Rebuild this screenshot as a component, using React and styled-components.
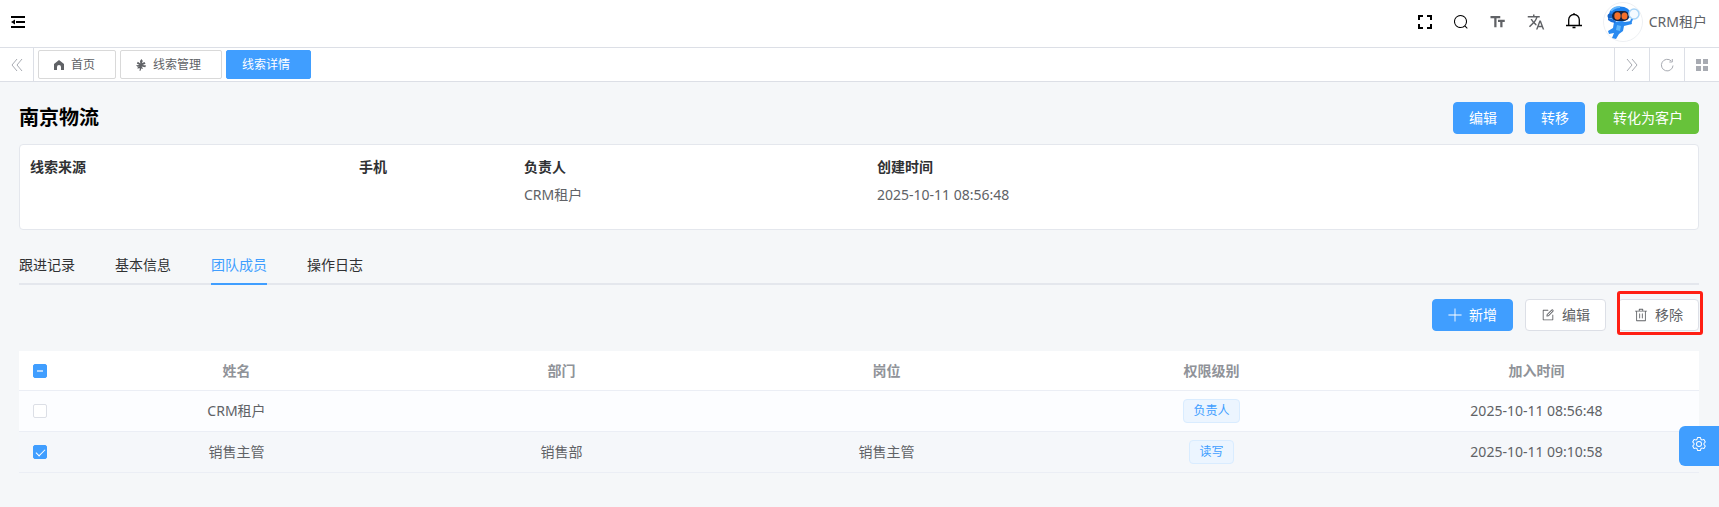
import React, { useEffect, useRef, useState } from "react";
import styled, { createGlobalStyle, css } from "styled-components";

const members = [
  { id: 1, name: "CRM租户", dept: "", post: "", level: "负责人", time: "2025-10-11 08:56:48" },
  { id: 2, name: "销售主管", dept: "销售部", post: "销售主管", level: "读写", time: "2025-10-11 09:10:58" },
];

const details = [
  { label: "线索来源", value: "" },
  { label: "手机", value: "" },
  { label: "负责人", value: "CRM租户" },
  { label: "创建时间", value: "2025-10-11 08:56:48" },
];

const tabs = ["跟进记录", "基本信息", "团队成员", "操作日志"];

// icons, element-plus style on a 1024 grid
const Svg = ({ size = 16, box = "0 0 1024 1024", children, ...rest }) => (
  <svg width={size} height={size} viewBox={box} fill="currentColor" aria-hidden="true" {...rest}>
    {children}
  </svg>
);

const FoldIcon = () => (
  <Svg size={16} box="0 0 16 16">
    <path d="M1 2h14v2H1zM6 7h9v2H6zM1 12h14v2H1zM5 5.500v5L1 8z" />
  </Svg>
);

const FullscreenIcon = () => (
  <Svg size={16} box="0 0 16 16">
    <path d="M1 1h5v2H3v3H1zM10 1h5v5h-2V3h-3zM1 10h2v3h3v2H1zM13 10h2v5h-5v-2h3z" />
  </Svg>
);

const SearchIcon = () => (
  <Svg size={16}>
    <path d="m795.904 750.72 124.992 124.928a32 32 0 0 1-45.248 45.248L750.656 795.904a416 416 0 1 1 45.248-45.248zM480 832a352 352 0 1 0 0-704 352 352 0 0 0 0 704z" />
  </Svg>
);

const FontSizeIcon = () => (
  <Svg size={18} box="0 0 24 24">
    <path d="M2 4v3h5v12h3V7h5V4H2zm19 5h-9v3h3v7h3v-7h3V9z" />
  </Svg>
);

const LanguageIcon = () => (
  <Svg size={18} box="0 0 24 24">
    <path d="m12.87 15.07-2.54-2.51.03-.03c1.74-1.94 2.98-4.17 3.71-6.53H17V4h-7V2H8v2H1v1.99h11.17C11.5 7.92 10.44 9.75 9 11.35 8.07 10.32 7.3 9.19 6.69 8h-2c.73 1.63 1.73 3.17 2.98 4.56l-5.09 5.02L4 19l5-5 3.11 3.11.76-2.04zM18.5 10h-2L12 22h2l1.12-3h4.75L21 22h2l-4.5-12zm-2.62 7 1.62-4.33L19.12 17h-3.24z" />
  </Svg>
);

const BellIcon = () => (
  <Svg size={18} box="0 2 18 18" fill="none" stroke="currentColor" strokeWidth="1.300">
    <path d="M1 14.500h16M3.700 14.500V8.800a5.300 5.300 0 0 1 10.600 0v5.700M9 3.500V2M7.500 16.500h3" />
  </Svg>
);

const DoubleArrow = ({ right }) => (
  <Svg size={18} box="0 0 18 18" fill="none" stroke="currentColor">
    {right ? (
      <path d="M4 3l5 6-5 6M9 3l5 6-5 6" />
    ) : (
      <path d="M9 3L4 9l5 6M14 3L9 9l5 6" />
    )}
  </Svg>
);

const RefreshIcon = () => (
  <Svg size={16} box="0 0 16 16" fill="none" stroke="currentColor">
    <path d="M14 8.500a5.800 5.800 0 1 1-1.800-4.600M13.300 2v3h-3" />
  </Svg>
);

const GridIcon = () => (
  <Svg size={12} box="0 0 12 12">
    <path d="M0 0h5v5H0zM7 0h5v5H7zM0 7h5v5H0zM7 7h5v5H7z" />
  </Svg>
);

const HomeIcon = () => (
  <Svg size={12} box="0 0 12 12">
    <path d="M6 1l5 4v6H8V8a2 2 0 0 0-4 0v3H1V5z" />
  </Svg>
);

const LeafIcon = () => (
  <Svg size={12} box="0 0 12 12">
    <path d="M6.500 0l1.300 2-1 2.200L9.500 3l1 1.800L7.500 6l3.700.6-1 1.600-3.600-.7 1.600 2.200-2-.3-.5 2.100-1.200.5.4-2.700-2.700.3.8-1.500L5 7.500l-2.500.2L1 6.300l3.500-.2L1.800 4.500l1-1.700L5.300 4.500 5 2z" />
  </Svg>
);

const PlusIcon = () => (
  <Svg size={14}>
    <path d="M480 480V32h64v448h448v64H544v448h-64V544H32v-64z" />
  </Svg>
);

const EditIcon = () => (
  <Svg size={14}>
    <path d="M832 512a32 32 0 1 1 64 0v352a32 32 0 0 1-32 32H160a32 32 0 0 1-32-32V160a32 32 0 0 1 32-32h352a32 32 0 0 1 0 64H192v640h640V512z" />
    <path d="m469.952 554.240 52.800-7.552L847.104 222.400a32 32 0 1 0-45.248-45.248L477.440 501.440l-7.552 52.800zm422.400-422.400a96 96 0 0 1 0 135.808l-331.840 331.840a32 32 0 0 1-18.112 9.088L436.800 623.680a32 32 0 0 1-36.224-36.224l15.104-105.600a32 32 0 0 1 9.024-18.112l331.904-331.840a96 96 0 0 1 135.744 0z" />
  </Svg>
);

const DeleteIcon = () => (
  <Svg size={14}>
    <path d="M160 256H96a32 32 0 0 1 0-64h256V95.936a32 32 0 0 1 32-32h256a32 32 0 0 1 32 32V192h256a32 32 0 1 1 0 64h-64v672a32 32 0 0 1-32 32H192a32 32 0 0 1-32-32V256zm448-64v-64H416v64h192zM224 896h576V256H224v640zm192-128a32 32 0 0 1-32-32V416a32 32 0 0 1 64 0v320a32 32 0 0 1-32 32zm192 0a32 32 0 0 1-32-32V416a32 32 0 0 1 64 0v320a32 32 0 0 1-32 32z" />
  </Svg>
);

const GearIcon = () => (
  <Svg size={16}>
    <path d="M600.704 64a32 32 0 0 1 30.464 22.208l35.200 109.376c14.784 7.232 28.928 15.360 42.432 24.512l112.384-24.192a32 32 0 0 1 34.432 15.360L944.320 364.800a32 32 0 0 1-4.032 37.504l-77.120 85.120a357.120 357.120 0 0 1 0 49.024l77.120 85.248a32 32 0 0 1 4.032 37.504l-88.704 153.600a32 32 0 0 1-34.432 15.296L708.800 803.904c-13.440 9.088-27.648 17.280-42.368 24.512l-35.264 109.376A32 32 0 0 1 600.704 960H423.296a32 32 0 0 1-30.464-22.208L357.696 828.480a351.616 351.616 0 0 1-42.560-24.640l-112.320 24.256a32 32 0 0 1-34.432-15.360L79.680 659.200a32 32 0 0 1 4.032-37.504l77.120-85.248a357.120 357.120 0 0 1 0-48.896l-77.120-85.248A32 32 0 0 1 79.680 364.800l88.704-153.600a32 32 0 0 1 34.432-15.296l112.320 24.256c13.568-9.152 27.776-17.408 42.560-24.640l35.200-109.312A32 32 0 0 1 423.232 64H600.640zm-23.424 64H446.720l-36.352 113.088-24.512 11.968a294.113 294.113 0 0 0-34.816 20.096l-22.656 15.360-116.224-25.088-65.280 113.152 79.680 88.192-1.920 27.136a293.120 293.120 0 0 0 0 40.192l1.920 27.136-79.808 88.192 65.344 113.152 116.224-25.024 22.656 15.296a294.113 294.113 0 0 0 34.816 20.096l24.512 11.968L446.720 896h130.688l36.480-113.152 24.448-11.904a288.282 288.282 0 0 0 34.752-20.096l22.592-15.296 116.288 25.024 65.280-113.152-79.744-88.192 1.920-27.136a293.120 293.120 0 0 0 0-40.256l-1.920-27.136 79.808-88.128-65.344-113.152-116.288 24.960-22.592-15.232a287.616 287.616 0 0 0-34.752-20.096l-24.448-11.904L577.344 128zM512 320a192 192 0 1 1 0 384 192 192 0 0 1 0-384zm0 64a128 128 0 1 0 0 256 128 128 0 0 0 0-256z" />
  </Svg>
);

const Robot = () => (
  <svg width="40" height="40" viewBox="0 0 40 40" role="img" aria-label="avatar">
    <circle cx="20" cy="20" r="19.500" fill="#fff" stroke="#eef0f3" />
    <path d="M11 20l8-1 3 1 6-1 1 3-8 2-1 5-4 3-3 5-4-1 2-5-5 1-1-3 5-3z" fill="#2a8af0" />
    <path d="M12 21l-4-1-3-2v-2l4 1 4 2z" fill="#1c6fd8" />
    <path d="M14 23l4 1-1 5-4-1z" fill="#63b8fb" />
    <ellipse cx="17" cy="12" rx="11" ry="7.500" fill="#1e82ee" />
    <path d="M8 9q3-4 9-4" stroke="#69b9fb" strokeWidth="2" fill="none" />
    <circle cx="7" cy="14" r="2.500" fill="#1565c8" />
    <rect x="9" y="9" width="17" height="10" rx="5" fill="#16233f" />
    <ellipse cx="14.500" cy="14" rx="3.200" ry="3.700" fill="#f4702a" />
    <ellipse cx="21.500" cy="14" rx="3" ry="3.500" fill="#f4702a" />
    <circle cx="31" cy="12" r="5" fill="#f4faff" stroke="#a9d5f7" strokeWidth="1.500" />
    <path d="M29 17l-2 5" stroke="#2a8af0" strokeWidth="2" />
  </svg>
);

function App() {
  const [checked, setChecked] = useState([2]);
  const [tab, setTab] = useState("团队成员");
  const allRef = useRef(null);
  const all = checked.length === members.length;

  useEffect(() => {
    allRef.current.indeterminate = checked.length > 0 && !all;
  }, [checked, all]);

  const toggle = (id) => {
    setChecked(checked.includes(id) ? checked.filter((c) => c !== id) : [...checked, id]);
  };

  return (
    <>
      <GlobalStyle />
      <Header>
        <IconButton $dark aria-label="折叠菜单"><FoldIcon /></IconButton>
        <HeaderTools>
          <IconButton $dark aria-label="全屏"><FullscreenIcon /></IconButton>
          <IconButton $dark aria-label="搜索"><SearchIcon /></IconButton>
          <IconButton aria-label="字号"><FontSizeIcon /></IconButton>
          <IconButton aria-label="语言"><LanguageIcon /></IconButton>
          <IconButton $dark aria-label="通知"><BellIcon /></IconButton>
          <UserButton>
            <Robot />
            CRM租户
          </UserButton>
        </HeaderTools>
      </Header>
      <TagBar>
        <TagTool $side="right" aria-label="向左"><DoubleArrow /></TagTool>
        <TagList>
          <TagLink href="#home"><HomeIcon />首页</TagLink>
          <TagLink href="#clue"><LeafIcon />线索管理</TagLink>
          <TagLink href="#detail" $active>线索详情</TagLink>
        </TagList>
        <TagTool $side="left" aria-label="向右"><DoubleArrow right /></TagTool>
        <TagTool $side="left" aria-label="刷新"><RefreshIcon /></TagTool>
        <TagTool $side="left" aria-label="更多"><GridIcon /></TagTool>
      </TagBar>
      <Main>
        <TitleRow>
          <Title>南京物流</Title>
          <ButtonGroup>
            <Button $type="primary">编辑</Button>
            <Button $type="primary">转移</Button>
            <Button $type="success">转化为客户</Button>
          </ButtonGroup>
        </TitleRow>
        <Card>
          {details.map((item) => (
            <div key={item.label}>
              <Label>{item.label}</Label>
              <Value>{item.value}</Value>
            </div>
          ))}
        </Card>
        <Tabs role="tablist">
          {tabs.map((name) => (
            <Tab key={name} role="tab" aria-selected={tab === name} $active={tab === name} onClick={() => setTab(name)}>
              {name}
            </Tab>
          ))}
        </Tabs>
        <Toolbar>
          <Button $type="primary"><PlusIcon />新增</Button>
          <Button><EditIcon />编辑</Button>
          <Marked>
            <Button><DeleteIcon />移除</Button>
          </Marked>
        </Toolbar>
        <Table>
          <thead>
            <tr>
              <CheckCell as="th">
                <Checkbox
                  ref={allRef}
                  checked={all}
                  onChange={() => setChecked(all ? [] : members.map((m) => m.id))}
                  aria-label="全选"
                />
              </CheckCell>
              <Th>姓名</Th>
              <Th>部门</Th>
              <Th>岗位</Th>
              <Th>权限级别</Th>
              <Th>加入时间</Th>
            </tr>
          </thead>
          <tbody>
            {members.map((m) => (
              <Row key={m.id} $selected={checked.includes(m.id)}>
                <CheckCell>
                  <Checkbox checked={checked.includes(m.id)} onChange={() => toggle(m.id)} aria-label={m.name} />
                </CheckCell>
                <Td>{m.name}</Td>
                <Td>{m.dept}</Td>
                <Td>{m.post}</Td>
                <Td><Level>{m.level}</Level></Td>
                <Td>{m.time}</Td>
              </Row>
            ))}
          </tbody>
        </Table>
      </Main>
      <SettingButton aria-label="设置"><GearIcon /></SettingButton>
    </>
  );
}

export default App;

const GlobalStyle = createGlobalStyle`
  * {
    box-sizing: border-box;
  }
  body {
    margin: 0;
    background: #f5f7f9;
    color: #606266;
    font-family: "Noto Sans", "Noto Sans CJK SC", sans-serif;
    font-size: 14px;
    line-height: 20px;
  }
  button {
    font: inherit;
    cursor: pointer;
  }
  svg {
    display: block;
    flex: none;
  }
`;

const Header = styled.header`
  display: flex;
  justify-content: space-between;
  height: 48px;
  padding-bottom: 3px;
  background: #fff;
  border-bottom: 1px solid #dcdfe6;
`;

const HeaderTools = styled.div`
  display: flex;
  padding-right: 12px;
`;

const IconButton = styled.button`
  display: flex;
  align-items: center;
  padding: 0 10px;
  border: none;
  background: none;
  color: ${(props) => (props.$dark ? "#000" : "#606266")};
`;

const UserButton = styled.button`
  display: flex;
  align-items: center;
  gap: 6px;
  padding: 0 0 0 10px;
  border: none;
  background: none;
  color: #606266;
`;

const TagBar = styled.nav`
  display: flex;
  height: 34px;
  background: #fff;
  border-bottom: 1px solid #dcdfe6;
`;

const TagTool = styled.button`
  display: flex;
  align-items: center;
  justify-content: center;
  width: ${(props) => (props.$side === "right" ? "34px" : "35px")};
  padding: 0;
  border: none;
  border-${(props) => props.$side}: 1px solid #dcdfe6;
  background: none;
  color: #a8abb2;
`;

const TagList = styled.div`
  display: flex;
  flex: 1;
  align-items: center;
  gap: 4px;
  padding-left: 4px;
`;

const TagLink = styled.a`
  display: flex;
  align-items: center;
  gap: 6px;
  height: 29px;
  padding: 0 20px 0 14px;
  border: 1px solid #d9d9d9;
  border-radius: 2px;
  color: #606266;
  font-size: 12px;
  text-decoration: none;
  ${(props) =>
    props.$active &&
    css`
      padding: 0 20px 0 15px;
      border-color: #409eff;
      background: #409eff;
      color: #fff;
    `}
`;

const Main = styled.main`
  padding: 20px 20px 34px 19px;
`;

const TitleRow = styled.div`
  display: flex;
  align-items: center;
  justify-content: space-between;
`;

const Title = styled.h1`
  margin: 0;
  color: #000;
  font-size: 20px;
  line-height: 28px;
`;

const ButtonGroup = styled.div`
  display: flex;
  gap: 12px;
`;

const Button = styled.button`
  display: flex;
  align-items: center;
  gap: 7px;
  height: 32px;
  padding: 0 15px;
  border: 1px solid #dcdfe6;
  border-radius: 4px;
  background: #fff;
  color: #606266;
  ${(props) =>
    props.$type === "primary" &&
    css`
      border-color: #409eff;
      background: #409eff;
      color: #fff;
    `}
  ${(props) =>
    props.$type === "success" &&
    css`
      border-color: #67c23a;
      background: #67c23a;
      color: #fff;
    `}
`;

const Card = styled.section`
  display: grid;
  grid-template-columns: 329fr 165fr 353fr 811fr;
  min-height: 86px;
  margin-top: 10px;
  padding: 12px 10px;
  border: 1px solid #e4e7ed;
  border-radius: 4px;
  background: #fff;
`;

const Label = styled.div`
  margin-bottom: 8px;
  color: #303133;
  font-weight: 700;
`;

const Value = styled.div`
  color: #606266;
`;

const Tabs = styled.div`
  display: flex;
  gap: 40px;
  height: 40px;
  margin-top: 15px;
  box-shadow: inset 0 -2px #e4e7ed;
`;

const Tab = styled.button`
  padding: 2px 0 0;
  border: none;
  border-bottom: 2px solid ${(props) => (props.$active ? "#409eff" : "transparent")};
  background: none;
  color: ${(props) => (props.$active ? "#409eff" : "#303133")};
`;

const Toolbar = styled.div`
  display: flex;
  justify-content: flex-end;
  gap: 12px;
  margin: 14px 0 20px;
`;

// red frame laid over the remove button
const Marked = styled.div`
  position: relative;
  &::after {
    content: "";
    position: absolute;
    inset: -8px -4px -4px -1px;
    border: 3px solid #ff1f14;
    border-radius: 3px;
    pointer-events: none;
  }
`;

const Table = styled.table`
  width: 100%;
  table-layout: fixed;
  border-collapse: separate;
  border-spacing: 0;
  background: #fff;
`;

const Td = styled.td`
  height: 41px;
  padding: 0 12px;
  border-bottom: 1px solid #ebeef5;
  text-align: center;
`;

const Th = styled.th`
  height: 40px;
  padding: 0 12px;
  border-bottom: 1px solid #ebeef5;
  color: #909399;
  font-weight: 700;
`;

const CheckCell = styled.td`
  width: 55px;
  padding: 0 14px;
  border-bottom: 1px solid #ebeef5;
  text-align: left;
`;

const Row = styled.tr`
  background: ${(props) => (props.$selected ? "#f5f7fa" : "#fcfdff")};
`;

const Checkbox = styled.input.attrs({ type: "checkbox" })`
  appearance: none;
  display: grid;
  place-items: center;
  width: 14px;
  height: 14px;
  margin: 0;
  border: 1px solid #dcdfe6;
  border-radius: 2px;
  background: #fff;
  &:checked,
  &:indeterminate {
    border-color: #409eff;
    background: #409eff;
  }
  &:checked::after {
    content: "";
    width: 4px;
    height: 8px;
    margin-bottom: 2px;
    border: solid #fff;
    border-width: 0 1px 1px 0;
    transform: rotate(45deg);
  }
  &:indeterminate::after {
    content: "";
    width: 6px;
    height: 2px;
    background: #b3d8ff;
  }
`;

const Level = styled.span`
  display: inline-block;
  height: 24px;
  padding: 0 9px;
  border: 1px solid #d9ecff;
  border-radius: 4px;
  background: #ecf5ff;
  color: #409eff;
  font-size: 12px;
  line-height: 22px;
  vertical-align: middle;
`;

// floats over the right edge of the window
const SettingButton = styled.button`
  position: fixed;
  right: 0;
  bottom: 41px;
  display: flex;
  justify-content: center;
  width: 40px;
  height: 40px;
  padding: 10px 0 0;
  border: none;
  border-radius: 6px 0 0 6px;
  background: #409eff;
  color: #fff;
`;
